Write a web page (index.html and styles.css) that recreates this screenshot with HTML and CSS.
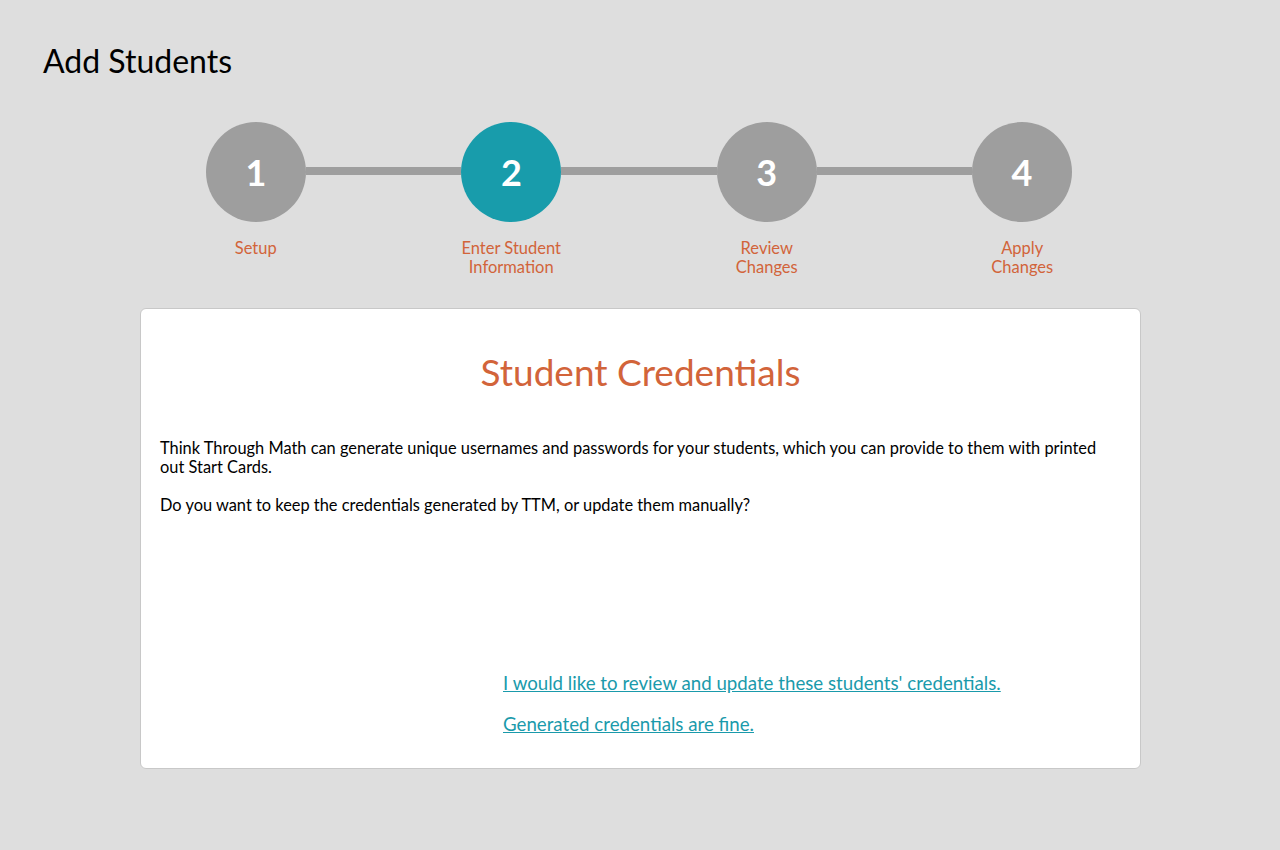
FILE: index.html
```html
<!DOCTYPE html>
<html lang="en">
<head>
<meta charset="utf-8">
<title>Add Students</title>
<link rel="stylesheet" href="styles.css">
</head>
<body>
<div class="page">
  <h1 class="page-title">Add Students</h1>

  <div class="wizard">
    <div class="wizard-track">
      <div class="step-circle">1</div>
      <div class="connector"></div>
      <div class="step-circle step-circle--active">2</div>
      <div class="connector"></div>
      <div class="step-circle">3</div>
      <div class="connector"></div>
      <div class="step-circle">4</div>
    </div>
    <div class="wizard-labels">
      <div class="step-label">Setup</div>
      <div class="step-label">Enter Student<br>Information</div>
      <div class="step-label">Review<br>Changes</div>
      <div class="step-label">Apply<br>Changes</div>
    </div>
  </div>

  <section class="card">
    <h2 class="card-title">Student Credentials</h2>
    <p class="card-text">Think Through Math can generate unique usernames and passwords for your students, which you can provide to them with printed out Start Cards.</p>
    <p class="card-text">Do you want to keep the credentials generated by TTM, or update them manually?</p>
    <div class="choices">
      <a class="choice" href="#">I would like to review and update these students' credentials.</a>
      <a class="choice" href="#">Generated credentials are fine.</a>
    </div>
  </section>
</div>
</body>
</html>
```

FILE: styles.css
```css
html, body {
  margin: 0;
  padding: 0;
  background: #dedede;
}

body {
  font-family: Lato, "Liberation Sans", sans-serif;
  color: #000;
}

.page {
  padding: 42px 0 0 0;
}

.page-title {
  margin: 0 0 0 43px;
  font-size: 32px;
  line-height: 38px;
  font-weight: 400;
}

.wizard {
  width: 1022px;
  margin: 42px 0 0 128px;
}

.wizard-track {
  display: flex;
  align-items: center;
  padding: 0 78px;
}

.step-circle {
  width: 100px;
  height: 100px;
  flex: 0 0 100px;
  border-radius: 50%;
  background: #9e9e9e;
  color: #fff;
  font-size: 36px;
  font-weight: 700;
  display: flex;
  align-items: center;
  justify-content: center;
}

.step-circle--active {
  background: #189cab;
}

.connector {
  flex: 1;
  height: 8px;
  background: #9e9e9e;
  margin-top: -2px;
}

.wizard-labels {
  display: grid;
  grid-template-columns: repeat(4, 1fr);
  margin-top: 17px;
}

.step-label {
  text-align: center;
  font-size: 16.5px;
  line-height: 19px;
  color: #d2643a;
}

.card {
  width: 1001px;
  box-sizing: border-box;
  margin: 31px 0 0 140px;
  background: #fff;
  border: 1px solid #c8c8c8;
  border-radius: 6px;
  padding: 20px 19px 32px;
}

.card-title {
  margin: 22px 0 0;
  text-align: center;
  font-size: 37px;
  line-height: 42px;
  font-weight: 400;
  color: #d2643a;
}

.card-text {
  margin: 45px 0 0;
  max-width: 950px;
  font-size: 16.4px;
  line-height: 19px;
}

.card-text + .card-text {
  margin-top: 19px;
}

.choices {
  display: flex;
  flex-direction: column;
  align-items: flex-start;
  gap: 18px;
  margin: 158px 0 0 343px;
}

.choice {
  font-size: 18.7px;
  line-height: 23px;
  color: #1a9aab;
  text-decoration: underline;
}
```
